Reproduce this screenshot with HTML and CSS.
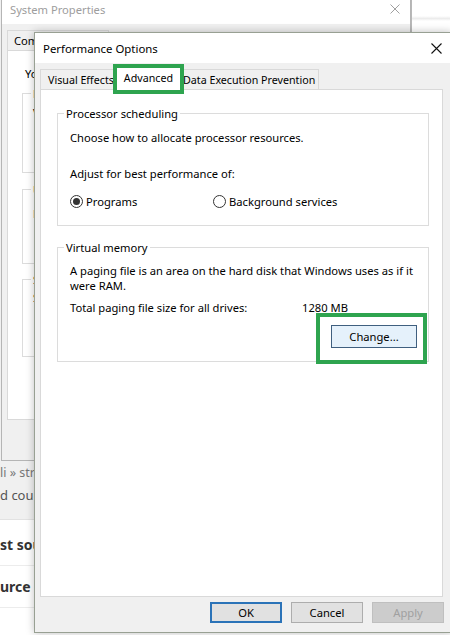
FILE: index.html
```html
<!DOCTYPE html>
<html lang="en">
<head>
<meta charset="utf-8">
<title>Performance Options</title>
<link rel="stylesheet" href="styles.css">
</head>
<body>
<div class="desktop">

  <div class="web">
    <div class="web-top">
      <div class="crumb">li » strumenti</div>
      <div class="sub">d courses</div>
    </div>
    <div class="web-list">
      <div class="web-item">st source</div>
      <div class="web-item">urce</div>
    </div>
  </div>

  <div class="win side">
    <div class="side-bar"></div>
  </div>

  <div class="win sysprops">
    <div class="sp-title">
      <span>System Properties</span>
      <svg class="sp-close" width="10" height="10" viewBox="0 0 10 10"><path d="M0.5 0.5L9.5 9.5M9.5 0.5L0.5 9.5" stroke="#a0a0a0" stroke-width="1" fill="none"/></svg>
    </div>
    <div class="sp-body">
      <div class="sp-tabs">
        <div class="sp-tab">Computer Name</div>
      </div>
      <div class="sp-panel">
        <p class="sp-note">You must be logged on</p>
        <fieldset class="sp-group g1">
          <legend>Performance</legend>
          <p>Visual effects</p>
        </fieldset>
        <fieldset class="sp-group g2">
          <legend>User Profiles</legend>
          <p>Desktop settings</p>
        </fieldset>
        <fieldset class="sp-group g3">
          <legend>Startup</legend>
          <p>System startup</p>
        </fieldset>
      </div>
    </div>
  </div>

  <div class="win perf">
    <div class="titlebar">
      <span class="title">Performance Options</span>
      <span class="close">
        <svg width="11" height="11" viewBox="0 0 11 11"><path d="M0.5 0.5L10.5 10.5M10.5 0.5L0.5 10.5" stroke="#111" stroke-width="1.1" fill="none"/></svg>
      </span>
    </div>
    <div class="perf-body">
      <div class="tabs">
        <div class="tab first">Visual Effects</div>
        <div class="tab active">Advanced</div>
        <div class="tab last">Data Execution Prevention</div>
      </div>
      <div class="panel">
        <fieldset class="group proc">
          <legend>Processor scheduling</legend>
          <p class="l1">Choose how to allocate processor resources.</p>
          <p class="l2">Adjust for best performance of:</p>
          <div class="radios">
            <div class="radio checked"><span class="dot"></span>Programs</div>
            <div class="radio"><span class="dot"></span>Background services</div>
          </div>
        </fieldset>
        <fieldset class="group vm">
          <legend>Virtual memory</legend>
          <p class="desc">A paging file is an area on the hard disk that Windows uses as if it<br>were RAM.</p>
          <div class="total"><span>Total paging file size for all drives:</span><span>1280 MB</span></div>
          <div class="change-row"><span class="btn change">Change...</span></div>
        </fieldset>
      </div>
      <div class="buttons">
        <span class="btn ok">OK</span>
        <span class="btn">Cancel</span>
        <span class="btn disabled">Apply</span>
      </div>
    </div>
  </div>

</div>
</body>
</html>
```

FILE: styles.css
```css
* { box-sizing: border-box; }
html, body { margin: 0; padding: 0; }
body {
  width: 450px;
  height: 635px;
  overflow: hidden;
  background: #f0f0f0;
  font-family: "Noto Sans", "Segoe UI", "DejaVu Sans", sans-serif;
  font-size: 11.2px;
  color: #000;
}
p { margin: 0; }
.desktop { position: relative; width: 450px; height: 635px; overflow: hidden; }
.win { position: absolute; }

/* background web page */
.web {
  position: absolute;
  left: 0; top: 461px;
  width: 450px; height: 174px;
  background: #fff;
  display: flex; flex-direction: column;
}
.web-top {
  height: 59px;
  background: #f0f0f0;
  border-bottom: 1px solid #e2e2e2;
  padding-top: 1px;
}
.crumb { height: 22px; line-height: 22px; color: #777; font-size: 12.5px; white-space: nowrap; }
.sub { height: 22px; line-height: 22px; color: #555; font-size: 13px; white-space: nowrap; }
.web-list { padding-top: 4px; }
.web-item {
  height: 42px; line-height: 42px;
  font-size: 14px; font-weight: bold; color: #333;
  border-bottom: 1px solid #ececec;
  white-space: nowrap;
}

/* right-hand background window */
.side {
  left: 411px; top: -1px;
  width: 60px; height: 60px;
  background: #fff;
  border-left: 1px solid #b8b8b8;
}
.side-bar {
  margin-top: 17px;
  height: 5px;
  background: linear-gradient(#fff, #ececec, #fff);
}

/* System Properties (inactive, behind) */
.sysprops {
  left: 1px; top: -7px;
  width: 410px; height: 468px;
  background: #f0f0f0;
  border: 1px solid #b5b5b5;
  display: flex; flex-direction: column;
}
.sp-title {
  height: 30px;
  background: #fff;
  color: #9d9d9d;
  display: flex; align-items: center; justify-content: space-between;
  padding: 0 10px 0 8px;
}
.sp-body { padding: 6px 5px 0 5px; }
.sp-tabs { display: flex; height: 20px; }
.sp-tab {
  height: 20px; line-height: 20px;
  padding: 0 6px;
  border: 1px solid #d9d9d9; border-bottom: none;
  white-space: nowrap;
}
.sp-panel {
  height: 370px;
  background: #fff;
  border: 1px solid #d9d9d9;
  padding: 15px 0 0 14px;
}
.sp-note { padding-left: 3px; line-height: 15px; white-space: nowrap; }
.sp-group {
  margin: 5px 14px 0 0;
  padding: 4px 10px 52px 10px;
  border: 1px solid #dcdcdc;
  min-inline-size: 0;
  line-height: 15px;
}
.sp-group legend { margin-left: -2px; padding: 0 2px; }
.sp-group p { white-space: nowrap; }
.sp-group.g2 { margin-top: 9px; padding-top: 9px; padding-bottom: 42px; }
.sp-group.g3 { margin-top: 8px; padding-top: 3px; padding-bottom: 51px; }

/* Performance Options dialog */
.perf {
  left: 34px; top: 32px;
  width: 418px; height: 601px;
  background: #f0f0f0;
  border: 1px solid #98a093;
  box-shadow: 0 0 8px rgba(0, 0, 0, 0.25);
  display: flex; flex-direction: column;
}
.titlebar {
  height: 30px;
  background: #fff;
  display: flex; align-items: center; justify-content: space-between;
  padding-left: 8px;
}
.title { font-size: 11.4px; }
.close {
  width: 30px; height: 30px;
  display: flex; align-items: center; justify-content: center;
}
.perf-body {
  flex: 1;
  display: flex; flex-direction: column;
  padding: 3px 8px 9px 5px;
}
.tabs {
  height: 23px;
  display: flex; align-items: flex-end;
  position: relative; z-index: 2;
  font-size: 10.7px;
}
.tab {
  height: 20px; line-height: 21px;
  padding: 0 2px 0 7px;
  border: 1px solid #d9d9d9; border-bottom: none;
  background: #f0f0f0;
  white-space: nowrap;
}
.tab.last { padding: 0 3px 0 2px; }
.tab.active {
  position: relative;
  height: 24px; line-height: 23px;
  margin: 0 -2px -1px -2px;
  padding: 0 8px;
  background: #fff;
  z-index: 3;
}
.tab.active::after {
  content: "";
  position: absolute;
  left: -3px; right: -3px; top: -3px; bottom: -4px;
  border: 4px solid #2ea44f;
}
.panel {
  flex: 1;
  background: #fff;
  border: 1px solid #d9d9d9;
  line-height: 15px;
}
.group {
  border: 1px solid #dcdcdc;
  margin: 0 13px 0 16px;
  padding: 9px 11px 16px 12px;
  min-inline-size: 0;
}
.group legend { margin-left: -6px; padding: 0 2px; }
.group.proc { margin-top: 16px; }
.group.vm { margin-top: 14px; padding-top: 8px; padding-bottom: 13px; }
.l2 { margin-top: 21px; }
.radios {
  margin-top: 13px;
  display: grid;
  grid-template-columns: 143px auto;
}
.radio { display: flex; align-items: center; gap: 3px; }
.dot {
  width: 13px; height: 13px;
  border: 1px solid #333;
  border-radius: 50%;
  background: #fff;
  display: inline-flex; align-items: center; justify-content: center;
}
.radio.checked .dot::after {
  content: "";
  width: 7px; height: 7px;
  border-radius: 50%;
  background: #333;
}
.desc { white-space: nowrap; }
.total {
  margin-top: 7px;
  display: grid;
  grid-template-columns: 232px auto;
}
.change-row {
  margin-top: 10px;
  display: flex; justify-content: flex-end;
}

.btn {
  display: inline-flex; align-items: center; justify-content: center;
  width: 72px; height: 21px;
  border: 1px solid #adadad;
  background: #e1e1e1;
  white-space: nowrap;
}
.btn.change {
  position: relative;
  width: 86px; height: 23px;
  background: #e5f1fb;
  border-color: #3f5f7f;
}
.btn.change::after {
  content: "";
  position: absolute;
  left: -16px; right: -11px; top: -13px; bottom: -17px;
  border: 4px solid #2ea44f;
}
.buttons {
  margin-top: 5px;
  display: flex; justify-content: flex-end; gap: 9px;
  margin-right: -1px;
}
.btn.ok { border: 2px solid #2b73b8; }
.btn.disabled { background: #cccccc; border-color: #bfbfbf; color: #a0a0a0; }
```
